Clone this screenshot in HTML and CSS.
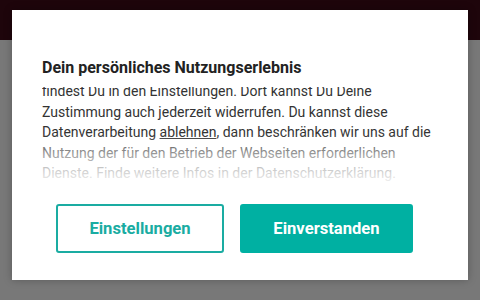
FILE: index.html
```html
<!DOCTYPE html>
<html lang="de">
<head>
<meta charset="utf-8">
<link rel="stylesheet" href="styles.css">
</head>
<body>
<div class="page">
  <div class="topbar"></div>
  <div class="rest"></div>
</div>
<div class="modal">
  <h2 class="title">Dein persönliches Nutzungserlebnis</h2>
  <div class="scroll">
    <p class="text">findest Du in den Einstellungen. Dort kannst Du Deine Zustimmung auch jederzeit widerrufen. Du kannst diese Datenverarbeitung <a class="link">ablehnen</a>, dann beschränken wir uns auf die Nutzung der für den Betrieb der Webseiten erforderlichen Dienste. Finde weitere Infos in der Datenschutzerklärung. Impressum</p>
  </div>
  <div class="actions">
    <button class="btn btn-outline">Einstellungen</button>
    <button class="btn btn-fill">Einverstanden</button>
  </div>
</div>
</body>
</html>
```

FILE: styles.css
```css
html, body {
  margin: 0;
  padding: 0;
  width: 480px;
  height: 300px;
  overflow: hidden;
  font-family: Roboto, "Liberation Sans", sans-serif;
}
.page {
  display: flex;
  flex-direction: column;
  height: 300px;
}
.topbar {
  height: 40px;
  background: #1e050b;
}
.rest {
  flex: 1;
  background: #787878;
}
.modal {
  position: absolute;
  left: 12px;
  top: 10px;
  width: 456px;
  height: 270px;
  box-sizing: border-box;
  background: #fff;
  padding: 48px 30px 0 30px;
  box-shadow: 0 0 8px rgba(0,0,0,0.25);
}
.title {
  margin: 0;
  font-size: 16px;
  line-height: 20px;
  font-weight: 700;
  color: #222;
}
.scroll {
  position: relative;
  margin-top: 9px;
  height: 95px;
  overflow: hidden;
}
.scroll::after {
  content: "";
  position: absolute;
  left: 0;
  right: 0;
  bottom: 0;
  height: 48px;
  background: linear-gradient(to bottom, rgba(255,255,255,0) 0%, rgba(255,255,255,0.55) 45%, rgba(255,255,255,0.92) 100%);
}
.text {
  margin: -6px 0 0 0;
  font-size: 14px;
  line-height: 20.5px;
  color: #333;
}
.link {
  color: #333;
  text-decoration: underline;
}
.actions {
  display: flex;
  gap: 16px;
  padding-left: 14px;
  margin-top: 22px;
}
.btn {
  height: 49px;
  box-sizing: border-box;
  border-radius: 3px;
  font-family: Roboto, "Liberation Sans", sans-serif;
  font-size: 16.6px;
  font-weight: 700;
  cursor: pointer;
}
.btn-outline {
  width: 168px;
  background: #fff;
  border: 2px solid #1aaca2;
  color: #1aaca2;
}
.btn-fill {
  width: 173px;
  background: #00b0a2;
  border: 2px solid #00b0a2;
  color: #fff;
}
```
